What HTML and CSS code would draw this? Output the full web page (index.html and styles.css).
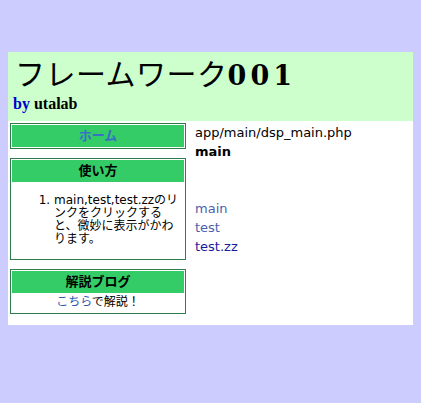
FILE: index.html
```html
<!DOCTYPE html>
<html>
<head>
    <meta charset="utf-8">
    <title>フレームワーク001</title>
    <link rel="stylesheet" href="styles.css">
</head>
<body>
    <div class="page">
        <div class="header">
            <h1>フレームワーク<span class="num">001</span></h1>
            <p class="by"><span class="by-word">by</span> utalab</p>
        </div>
        <div class="main">
            <div class="side">
                <div class="box">
                    <div class="box-title"><a href="#" class="home">ホーム</a></div>
                </div>
                <div class="box">
                    <div class="box-title">使い方</div>
                    <div class="box-body">
                        <ol>
                            <li>main,test,test.zzのリンクをクリックすると、微妙に表示がかわります。</li>
                        </ol>
                    </div>
                </div>
                <div class="box">
                    <div class="box-title">解説ブログ</div>
                    <div class="box-body blog"><a href="#" class="here">こちら</a>で解説！</div>
                </div>
            </div>
            <div class="content">
                <div>app/main/dsp_main.php</div>
                <div class="page-name">main</div>
                <div class="links">
                    <a href="#" class="visited">main</a>
                    <a href="#" class="visited">test</a>
                    <a href="#">test.zz</a>
                </div>
            </div>
        </div>
    </div>
</body>
</html>
```

FILE: styles.css
```css
* {
    margin: 0;
    padding: 0;
    box-sizing: border-box;
}

body {
    background-color: #ccccff;
    margin: 8px;
    font-family: 'DejaVu Sans', 'Noto Sans CJK JP', sans-serif;
    font-size: 12px;
}

.page {
    width: 409px;
    margin-top: 44px;
}

.header {
    background: #ccffcc;
    height: 69px;
    padding: 4px 5px 0 5px;
}

h1 {
    font-family: 'DejaVu Serif', 'Noto Sans CJK JP', serif;
    font-weight: normal;
    font-size: 30px;
    line-height: 38px;
    padding-left: 2px;
    letter-spacing: 0.5px;
    color: #000;
}

h1 .num {
    font-weight: bold;
    font-size: 27px;
    letter-spacing: 4px;
}

.by {
    font-family: 'Liberation Serif', serif;
    font-weight: bold;
    font-size: 16px;
    line-height: 18px;
}

.by-word {
    color: #0000cc;
}

.main {
    background: #fff;
    display: flex;
    gap: 9px;
    padding: 2px 2px 11px 2px;
}

.side {
    width: 176px;
    display: flex;
    flex-direction: column;
    gap: 9px;
}

.box {
    border: 1px solid #2e7d4a;
    padding: 1px;
    background: #fff;
}

.box-title {
    background: #33cc66;
    text-align: center;
    font-weight: bold;
    font-size: 13px;
    line-height: 22px;
    color: #000;
}

.home {
    color: #3a6fc4;
    text-decoration: none;
}

.box-body {
    padding: 12px 0 12px 0;
}

ol {
    padding-left: 42px;
    line-height: 13px;
    font-size: 12px;
}

.box-body.blog {
    padding: 0 0 1px 0;
    text-align: center;
    line-height: 18px;
}

.here {
    color: #3355aa;
    text-decoration: none;
}

.content {
    flex: 1;
    font-size: 13px;
    line-height: 19px;
}

.page-name {
    font-weight: bold;
    margin-bottom: 38px;
}

.links a {
    display: block;
    color: #1a1aa0;
    text-decoration: none;
}

.links a.visited {
    color: #4a5fae;
}
```
